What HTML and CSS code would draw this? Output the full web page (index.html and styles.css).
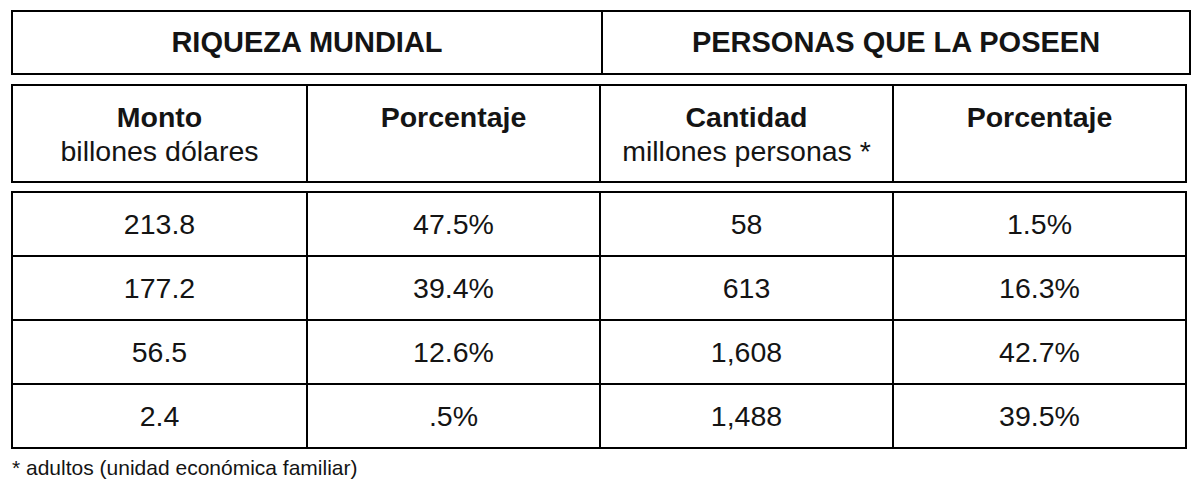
FILE: index.html
```html
<!DOCTYPE html>
<html lang="es">
<head>
<meta charset="utf-8">
<title>Riqueza mundial</title>
<link rel="stylesheet" href="styles.css">
</head>
<body>
<main class="page">
  <table class="tbl tbl-title">
    <tr>
      <td>RIQUEZA MUNDIAL</td>
      <td>PERSONAS QUE LA POSEEN</td>
    </tr>
  </table>
  <table class="tbl tbl-head">
    <tr>
      <td><b>Monto</b><br>billones dólares</td>
      <td><b>Porcentaje</b></td>
      <td><b>Cantidad</b><br>millones personas *</td>
      <td><b>Porcentaje</b></td>
    </tr>
  </table>
  <table class="tbl tbl-data">
    <tr><td>213.8</td><td>47.5%</td><td>58</td><td>1.5%</td></tr>
    <tr><td>177.2</td><td>39.4%</td><td>613</td><td>16.3%</td></tr>
    <tr><td>56.5</td><td>12.6%</td><td>1,608</td><td>42.7%</td></tr>
    <tr><td>2.4</td><td>.5%</td><td>1,488</td><td>39.5%</td></tr>
  </table>
  <p class="note">* adultos (unidad económica familiar)</p>
</main>
</body>
</html>
```
FILE: styles.css
```css
html, body {
  margin: 0;
  padding: 0;
  background: #fff;
}
body {
  font-family: "Liberation Sans", Arial, sans-serif;
  color: #141414;
}
.page {
  padding: 10px 0 0 11px;
  display: flex;
  flex-direction: column;
  align-items: flex-start;
}
.tbl {
  border-collapse: separate;
  border-spacing: 0;
  border: 2px solid #000;
  table-layout: fixed;
  width: 1176px;
}
.tbl td {
  text-align: center;
  padding: 0;
  border-left: 2px solid #000;
  font-size: 28.5px;
}
.tbl td:first-child {
  border-left: none;
}
.tbl-title {
  width: 1180px;
}
.tbl-title td {
  height: 61px;
  font-size: 29px;
  font-weight: bold;
  vertical-align: middle;
}
.tbl-head {
  margin-top: 9px;
}
.tbl-head td {
  height: 95px;
  box-sizing: border-box;
  padding: 14px 0 13px;
  line-height: 34px;
  vertical-align: top;
}
.tbl-data {
  margin-top: 8px;
}
.tbl-data td {
  height: 62px;
  vertical-align: middle;
}
.tbl-data tr + tr td {
  border-top: 2px solid #000;
}
.note {
  margin: 6px 0 0 1px;
  font-size: 21px;
  line-height: 26px;
}
```
